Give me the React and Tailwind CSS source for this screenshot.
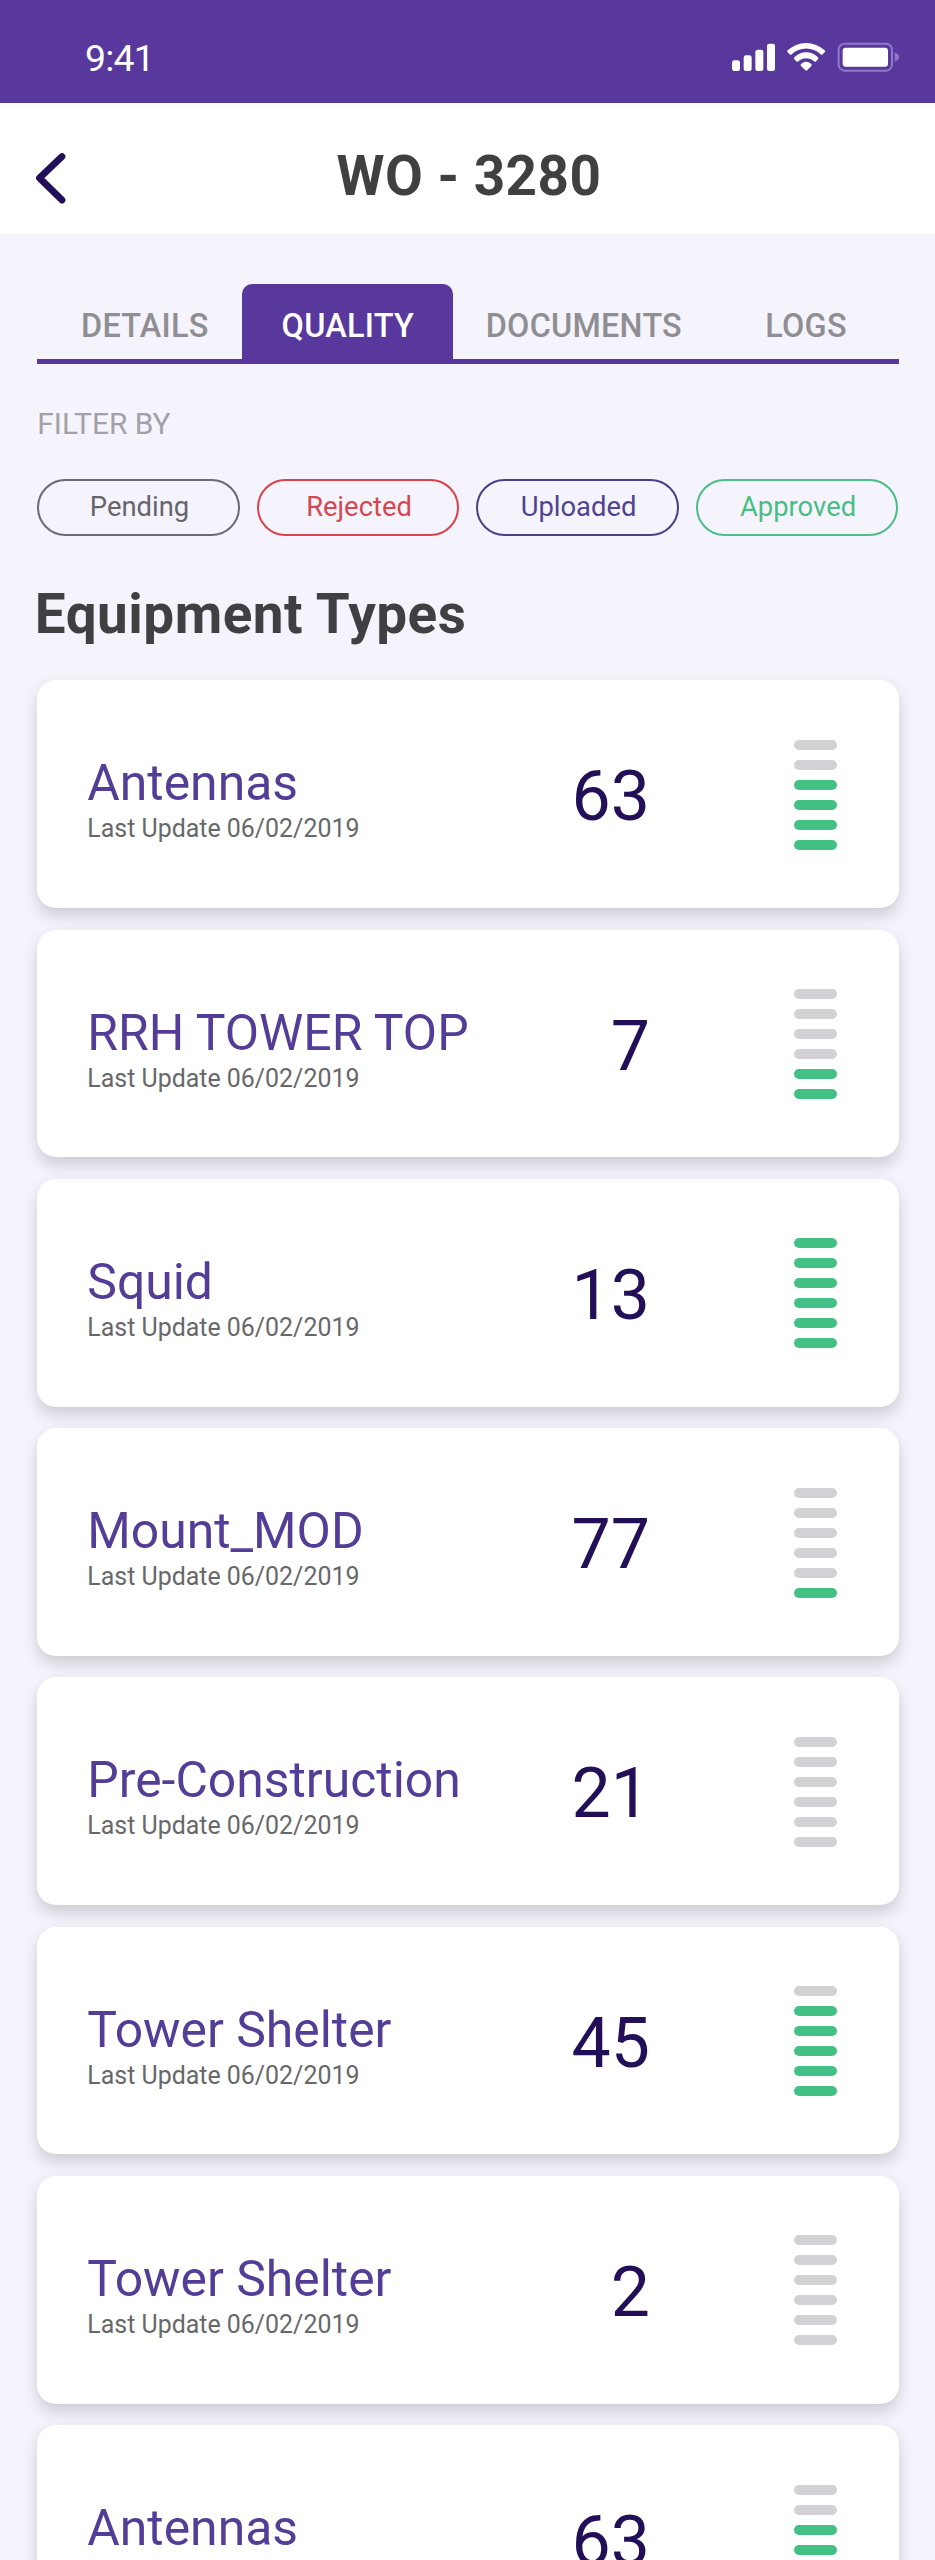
const EQUIPMENT = [
  { name: "Antennas", count: 63, level: 4 },
  { name: "RRH TOWER TOP", count: 7, level: 2 },
  { name: "Squid", count: 13, level: 6 },
  { name: "Mount_MOD", count: 77, level: 1 },
  { name: "Pre-Construction", count: 21, level: 0 },
  { name: "Tower Shelter", count: 45, level: 5 },
  { name: "Tower Shelter", count: 2, level: 0 },
  { name: "Antennas", count: 63, level: 4 },
];

const FILTERS = [
  { label: "Pending", style: "border-[#6c6b70] text-[#66656a]" },
  { label: "Rejected", style: "border-[#d9444c] text-[#d4484f]" },
  { label: "Uploaded", style: "border-[#4b4088] text-[#4f4490]" },
  { label: "Approved", style: "border-[#4bbd87] text-[#4bbd87]" },
];

function StatusIcons() {
  return (
    <svg className="h-[30px] w-[170px]" viewBox="0 0 510 90" fill="#fff">
      <rect x="3" y="55" width="24" height="32" rx="7" />
      <rect x="38" y="40" width="24" height="47" rx="7" />
      <rect x="73" y="23" width="24" height="64" rx="7" />
      <rect x="108" y="5" width="24" height="82" rx="7" />
      <g transform="translate(168 2)">
        <path d="M2 23A81 81 0 0 1 113 23Q116 26 113 29L107 35Q104 38 101 35A63 63 0 0 0 14 35Q11 38 8 35L2 29Q-1 26 2 23Z" />
        <path d="M23 43A49 49 0 0 1 92 43Q96 46 93 50L87 56Q84 59 81 56A34 34 0 0 0 34 56Q31 59 28 56L22 50Q19 46 23 43Z" />
        <path d="M42 64Q57.5 51 73 64Q76 67 73 70L60 83Q57.5 85 55 83L42 70Q39 67 42 64Z" />
      </g>
      <rect x="323" y="5" width="160" height="81" rx="18" fill="none" stroke="#9078c8" strokeWidth="6" />
      <path d="M491 31Q504 36 504 45Q504 54 491 59Z" fill="#9078c8" />
      <rect x="335" y="17" width="136" height="57" rx="9" />
    </svg>
  );
}

function StatusBar() {
  return (
    <div className="flex h-[103px] items-start justify-between bg-[#59389e] pt-[42px] pl-[85px] pr-[34px] text-white">
      <span className="mt-[-9px] text-[37.4px] leading-[50px] tracking-[-0.8px]">9:41</span>
      <StatusIcons />
    </div>
  );
}

function Header() {
  return (
    <header className="grid h-[131px] grid-cols-[100px_1fr_100px] items-center bg-white">
      <svg className="ml-[35px] mt-[19px] h-[52px] w-[32px]" viewBox="0 0 32 52" fill="none" stroke="#220f58" strokeWidth="6.8" strokeLinecap="round" strokeLinejoin="round">
        <path d="M27 4.5L4.5 26L27 48" />
      </svg>
      <h1 className="mt-[14px] pl-[3px] text-center text-[54.85px] font-bold leading-[60px] tracking-[0.5px] text-[#404040]">WO - 3280</h1>
    </header>
  );
}

function Tabs() {
  return (
    <nav className="flex h-[80px] border-b-[5px] border-[#59389e] text-[32.4px] font-medium leading-[40px] tracking-[0.25px] text-[#8f8e92]">
      <span className="w-[205px] pl-[43.7px] pt-[22px]">DETAILS</span>
      <span className="w-[211px] rounded-t-[10px] bg-[#59389e] pt-[22px] text-center text-white">QUALITY</span>
      <span className="w-[279px] pl-[32.4px] pt-[22px]">DOCUMENTS</span>
      <span className="pl-[33px] pt-[22px]">LOGS</span>
    </nav>
  );
}

function LevelMeter({ level }) {
  return (
    <div className="flex flex-col gap-[10px]">
      {[6, 5, 4, 3, 2, 1].map((step) => (
        <span key={step} className={`h-[10px] w-[43px] rounded-full ${step <= level ? "bg-[#43c083]" : "bg-[#d2d2d4]"}`} />
      ))}
    </div>
  );
}

function EquipmentCard({ name, count, level }) {
  return (
    <article className="flex h-[227.7px] items-start rounded-[19px] bg-white pl-[50px] shadow-[0_7.5px_15px_rgba(0,0,0,0.16)]">
      <div className="w-[420px] pt-[78px]">
        <h3 className="whitespace-nowrap text-[49.87px] leading-[50px] text-[#533d96]">{name}</h3>
        <p className="mt-[6px] text-[24.93px] leading-[30px] text-[#68686a]">Last Update 06/02/2019</p>
      </div>
      <span className="w-[142.7px] pt-[81px] text-right text-[69.8px] leading-[70px] text-[#220f58]">{count}</span>
      <div className="ml-[144.3px] pt-[59.5px]">
        <LevelMeter level={level} />
      </div>
    </article>
  );
}

export default function App() {
  return (
    <div className="h-[2560px] w-[935px] overflow-hidden bg-[#f5f4fd] font-[Roboto,sans-serif]">
      <StatusBar />
      <Header />
      <main className="pl-[37.3px] pr-[36px] pt-[50px]">
        <Tabs />
        <p className="mt-[41.5px] text-[29.92px] leading-[36px] text-[#a2a1a6]">FILTER BY</p>
        <div className="mt-[37.5px] flex gap-[17px]">
          {FILTERS.map(({ label, style }) => (
            <button key={label} className={`h-[57px] w-[202.5px] shrink-0 rounded-full border-2 pb-[2px] pl-[2px] text-[27.4px] leading-[50px] ${style}`}>
              {label}
            </button>
          ))}
        </div>
        <h2 className="ml-[-2.5px] mt-[48px] text-[54.85px] font-bold leading-[60px] tracking-[0.5px] text-[#404042]">Equipment Types</h2>
        <section className="mt-[36.3px] flex flex-col gap-[21.6px]">
          {EQUIPMENT.map((item, index) => (
            <EquipmentCard key={index} {...item} />
          ))}
        </section>
      </main>
    </div>
  );
}
